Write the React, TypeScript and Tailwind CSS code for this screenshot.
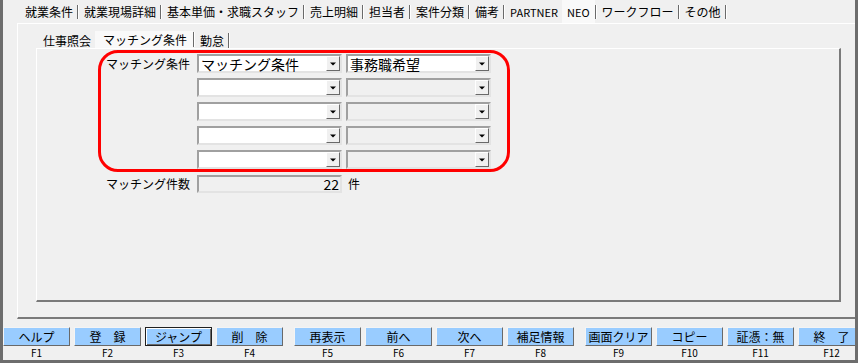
const outerTabs = [
  "就業条件",
  "就業現場詳細",
  "基本単価・求職スタッフ",
  "売上明細",
  "担当者",
  "案件分類",
  "備考",
  "PARTNER",
  "NEO",
  "ワークフロー",
  "その他",
];
const innerTabs = ["仕事照会", "マッチング条件", "勤怠"];

const fkeys: [string, string][] = [
  ["ヘルプ", "F1"],
  ["登　録", "F2"],
  ["ジャンプ", "F3"],
  ["削　除", "F4"],
  ["再表示", "F5"],
  ["前へ", "F6"],
  ["次へ", "F7"],
  ["補足情報", "F8"],
  ["画面クリア", "F9"],
  ["コピー", "F10"],
  ["証憑：無", "F11"],
  ["終　了", "F12"],
];

function Sep({ tall }: { tall?: boolean }) {
  return (
    <span
      className={
        tall
          ? "h-[15px] w-[2px] shrink-0 border-l border-r border-l-[#6a6a6a] border-r-white"
          : "h-[14px] w-[2px] shrink-0 border-l border-r border-l-[#6a6a6a] border-r-white"
      }
    />
  );
}

function TabStrip({
  tabs,
  selected,
  inner,
}: {
  tabs: string[];
  selected: number;
  inner?: boolean;
}) {
  return (
    <>
      {tabs.map((t, i) => {
        const sel = i === selected;
        const nextSel = i + 1 === selected;
        return (
          <div key={t} className="flex items-center">
            <span
              className={
                sel
                  ? inner
                    ? "flex h-[17px] items-center bg-[#f9f9f9] pl-[8px] pr-[6px]"
                    : "flex h-[23px] items-center bg-[#f9f9f9] px-[5px]"
                  : "flex items-center pl-[5px] pr-[4px]"
              }
            >
              <span className={t === "PARTNER" || t === "NEO" ? "text-[11px]" : ""}>{t}</span>
            </span>
            {!nextSel && <Sep tall={inner} />}
          </div>
        );
      })}
    </>
  );
}

function Combo({ value, disabled }: { value?: string; disabled?: boolean }) {
  return (
    <div
      className={
        disabled
          ? "flex h-[19px] w-[145px] border-2 border-t-[#a0a0a0] border-l-[#a0a0a0] border-r-[#e3e3e3] border-b-[#e3e3e3] bg-[#f0f0f0]"
          : "flex h-[19px] w-[145px] border-2 border-t-[#a0a0a0] border-l-[#a0a0a0] border-r-[#e3e3e3] border-b-[#e3e3e3] bg-white"
      }
    >
      <span className="flex flex-1 items-center whitespace-nowrap pl-[2px] text-[14px] leading-[16px]">
        {value}
      </span>
      <span className="flex h-full w-[14px] items-center justify-center border border-t-white border-l-white border-r-[#696969] border-b-[#696969] bg-[#f0f0f0] pt-[1px]">
        <svg width="6" height="4" viewBox="0 0 6 4">
          <path d="M0 0.5h6L3 3.5z" fill="#000" />
        </svg>
      </span>
    </div>
  );
}

function FKey({ label, key2 }: { label: string; key2: string }) {
  const focused = key2 === "F3";
  return (
    <div className="flex w-[67px] flex-col items-center">
      <div
        className={
          focused
            ? "flex h-[19px] w-full items-center justify-center border border-[#202020] bg-[#99ccff] text-[12px] shadow-[inset_1px_1px_0_#ffffff,inset_-1px_-1px_0_#696969]"
            : "flex h-[19px] w-full items-center justify-center border border-t-[#f4f4f4] border-l-[#f4f4f4] border-r-[#696969] border-b-[#696969] bg-[#99ccff] text-[12px]"
        }
      >
        {label}
      </div>
      <div className="flex h-[13px] items-center text-[10px] leading-none">{key2}</div>
    </div>
  );
}

export default function App() {
  const groups = [fkeys.slice(0, 4), fkeys.slice(4, 8), fkeys.slice(8, 12)];
  return (
    <div className="relative flex h-[363px] w-[858px] flex-col overflow-hidden border-x-[3px] border-b-[3px] border-[#6d6d6d] bg-[#f0f0f0] font-['Noto_Sans_CJK_JP',sans-serif] text-[12px] leading-[14px] text-black">
      {/* main tabs */}
      <div className="flex h-[23px] shrink-0 items-center pl-[17px]">
        <TabStrip tabs={outerTabs} selected={8} />
      </div>

      {/* outer tab page */}
      <div className="ml-[14px] flex flex-col border-t border-l border-b-2 border-t-white border-l-white border-b-[#7a7a7a] pb-[15px]">
        <div className="flex h-[24px] items-end pl-[20px]">
          <TabStrip tabs={innerTabs} selected={1} inner />
        </div>

        <div className="ml-[18px] flex h-[254px] w-[805px] flex-col border-t border-l border-r-2 border-b-2 border-t-white border-l-white border-r-[#7a7a7a] border-b-[#7a7a7a] pt-[5px]">
          <div className="flex">
            <div className="ml-[69px] w-[91px] pt-[3px]">マッチング条件</div>
            <div className="flex flex-col gap-[5px]">
              {[0, 1, 2, 3, 4].map((r) => (
                <div key={r} className="flex gap-[4px]">
                  <Combo value={r === 0 ? "マッチング条件" : ""} />
                  <Combo value={r === 0 ? "事務職希望" : ""} disabled={r !== 0} />
                </div>
              ))}
            </div>
          </div>
          <div className="mt-[6px] flex items-center">
            <div className="ml-[69px] w-[91px]">マッチング件数</div>
            <div className="flex h-[18px] w-[145px] items-center justify-end border-2 border-t-[#a0a0a0] border-l-[#a0a0a0] border-r-[#e3e3e3] border-b-[#e3e3e3] bg-[#f0f0f0] pr-[1px] text-[14px] leading-[16px]">
              22
            </div>
            <span className="ml-[6px]">件</span>
          </div>
        </div>
      </div>

      {/* function keys */}
      <div className="mt-[8px] flex gap-[11px]">
        {groups.map((g, gi) => (
          <div key={gi} className="flex gap-[4px]">
            {g.map(([l, k]) => (
              <FKey key={k} label={l} key2={k} />
            ))}
          </div>
        ))}
      </div>

      {/* annotation */}
      <div className="pointer-events-none absolute left-[95px] top-[50px] h-[122px] w-[412px] rounded-[20px] border-[3px] border-[#ff0000]" />
    </div>
  );
}
